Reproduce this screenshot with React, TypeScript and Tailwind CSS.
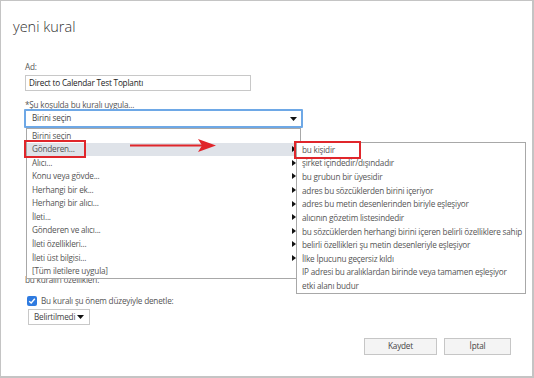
import React from 'react'

const mainItems = [
    { label: 'Birini seçin', sub: false },
    { label: 'Gönderen...', sub: true },
    { label: 'Alıcı...', sub: true },
    { label: 'Konu veya gövde...', sub: true },
    { label: 'Herhangi bir ek...', sub: true },
    { label: 'Herhangi bir alıcı...', sub: true },
    { label: 'İleti...', sub: true },
    { label: 'Gönderen ve alıcı...', sub: true },
    { label: 'İleti özellikleri...', sub: true },
    { label: 'İleti üst bilgisi...', sub: true },
    { label: '[Tüm iletilere uygula]', sub: false },
]

const subItems = [
    'bu kişidir',
    'şirket içindedir/dışındadır',
    'bu grubun bir üyesidir',
    'adres bu sözcüklerden birini içeriyor',
    'adres bu metin desenlerinden biriyle eşleşiyor',
    'alıcının gözetim listesindedir',
    'bu sözcüklerden herhangi birini içeren belirli özelliklere sahip',
    'belirli özellikleri şu metin desenleriyle eşleşiyor',
    'İlke İpucunu geçersiz kıldı',
    'IP adresi bu aralıklardan birinde veya tamamen eşleşiyor',
    'etki alanı budur',
]

const txt = 'text-[8.2px] tracking-[-0.2px]'

const Caret = () => (
    <svg width="4" height="6" viewBox="0 0 4 6" className="shrink-0">
        <path d="M0 0 L4 3 L0 6 Z" fill="#111" />
    </svg>
)

const DownCaret = () => (
    <svg width="7" height="4" viewBox="0 0 7 4" className="shrink-0">
        <path d="M0 0 L7 0 L3.5 4 Z" fill="#111" />
    </svg>
)

export default function App() {
    return (
        <div className="relative w-[534px] h-[378px] bg-white overflow-hidden text-[#444] font-['Open_Sans',sans-serif]">
            {/* ── Dialog frame ── */}
            <div className="absolute inset-0 border-t border-l border-b-2 border-r-2 border-[#c4c4c4] pointer-events-none" />

            <div className="flex flex-col h-full">
                <h1 className="pl-[13px] pt-[16px] text-[14.5px] leading-[22px] font-light text-[#333]">yeni kural</h1>

                <div className="pl-[25px] pt-[23px] flex flex-col">
                    <label className={`${txt} leading-[12px] text-[#555]`}>Ad:</label>
                    <div className={`mt-[2px] w-[226px] h-[16px] border border-[#c8c8c8] flex items-center pl-[3px] ${txt} text-[#222]`}>
                        Direct to Calendar Test Toplantı
                    </div>

                    <label className={`mt-[8px] ${txt} leading-[12px] text-[#555]`}>*Şu koşulda bu kuralı uygula...</label>
                    <div className={`-ml-[1px] mt-[-2px] w-[279px] h-[19px] border-2 border-[#6ea8e6] rounded-[1px] flex items-center justify-between pl-[6px] pr-[4px] ${txt} text-[#444]`}>
                        <span>Birini seçin</span>
                        <DownCaret />
                    </div>

                    {/* content hidden behind the open list */}
                    <div className="h-[146px]" />
                    <div className={`${txt} leading-[12px] text-[#555]`}>bu kuralın özellikleri:</div>

                    <div className="mt-[9px] ml-[2px] flex items-center gap-[4px]">
                        <span className="w-[10px] h-[10px] rounded-[2px] bg-[#2f7be0] flex items-center justify-center">
                            <svg width="8" height="8" viewBox="0 0 8 8">
                                <path d="M1.2 4.2 L3.2 6 L6.8 1.8" stroke="white" strokeWidth="1.4" fill="none" />
                            </svg>
                        </span>
                        <span className={`${txt} leading-[12px] text-[#555]`}>Bu kuralı şu önem düzeyiyle denetle:</span>
                    </div>
                    <div className={`mt-[2px] ml-[3px] w-[62px] h-[16px] border border-[#c8c8c8] flex items-center justify-between pl-[5px] pr-[5px] ${txt} text-[#444]`}>
                        <span>Belirtilmedi</span>
                        <DownCaret />
                    </div>
                </div>

                <div className="mt-[13px] flex justify-end gap-[7px] pr-[23px]">
                    <button className={`w-[73px] h-[17px] bg-[#f4f4f4] border border-[#c6c6c6] ${txt} text-[#444]`}>Kaydet</button>
                    <button className={`w-[67px] h-[17px] bg-[#f4f4f4] border border-[#c6c6c6] ${txt} text-[#444]`}>İptal</button>
                </div>
            </div>

            {/* ── Open condition list ── */}
            <div className="absolute left-[26px] top-[128px] w-[275px] h-[151px] bg-white border border-[#a8a8a8] flex flex-col">
                {mainItems.map((item, i) => (
                    <div
                        key={i}
                        className={`h-[13.6px] flex items-center justify-between pl-[5px] pr-[4px] ${txt} text-[#555] ${i === 1 ? 'bg-[#dfe3e9]' : ''}`}
                    >
                        <span>{item.label}</span>
                        {item.sub && <Caret />}
                    </div>
                ))}
            </div>

            {/* ── Sub list ── */}
            <div className="absolute left-[296px] top-[142px] w-[230px] h-[152px] bg-white border border-[#a8a8a8] flex flex-col">
                {subItems.map((label, i) => (
                    <div key={i} className={`h-[13.7px] flex items-center pl-[5px] ${txt} text-[#555] whitespace-nowrap`}>
                        {label}
                    </div>
                ))}
            </div>

            {/* ── Annotations ── */}
            <div className="absolute left-[24px] top-[140px] w-[62px] h-[18px] border-[2.5px] border-[#e0262b]" />
            <div className="absolute left-[294px] top-[141px] w-[67px] h-[18px] border-[2.5px] border-[#e0262b]" />
            <svg className="absolute left-[128px] top-[138px]" width="90" height="16" viewBox="0 0 90 16">
                <path d="M2 7.5 L74 7.5" stroke="#e0262b" strokeWidth="1.8" />
                <path d="M70 1 L88 7.5 L70 14 L74 7.5 Z" fill="#e0262b" />
            </svg>
        </div>
    )
}
